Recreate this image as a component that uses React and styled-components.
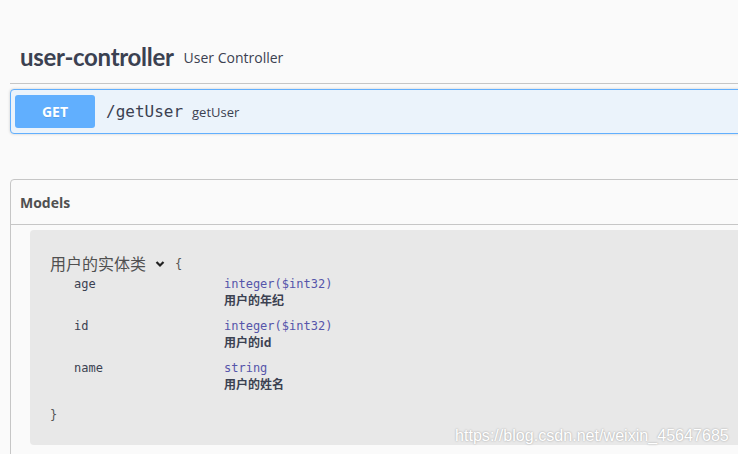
import React from "react";
import styled, { createGlobalStyle } from "styled-components";

const GlobalStyle = createGlobalStyle`
  html, body {
    margin: 0;
    padding: 0;
    background: #fafafa;
    overflow: hidden;
  }
  body {
    font-family: "Open Sans", "Noto Sans CJK SC", sans-serif;
    color: #3b4151;
  }
`;

const Page = styled.div`
  position: relative;
  width: 738px;
  height: 454px;
  padding-left: 10px;
  box-sizing: border-box;
  overflow: hidden;
`;

const Column = styled.div`
  width: 800px;
`;

const TagHeader = styled.div`
  display: flex;
  align-items: center;
  gap: 10px;
  height: 29px;
  padding: 42px 20px 12px 10px;
  border-bottom: 1px solid #c6c6c6;

  h3 {
    margin: 0;
    font-family: "Lato", sans-serif;
    font-size: 24px;
    font-weight: 700;
    letter-spacing: -0.3px;
    color: #3b4151;
  }

  small {
    margin-top: 2px;
    font-size: 14px;
    color: #3b4151;
  }
`;

const OpBlock = styled.div`
  display: flex;
  align-items: center;
  margin-top: 5px;
  padding: 5px 4px;
  border: 1px solid #61affe;
  border-radius: 4px;
  background: #ebf3fb;
  box-shadow: 0 0 3px rgba(0, 0, 0, 0.19);
`;

const MethodBadge = styled.span`
  display: flex;
  align-items: center;
  justify-content: center;
  width: 80px;
  height: 33px;
  border-radius: 3px;
  background: #61affe;
  color: #fff;
  font-size: 14px;
  font-weight: 700;
  text-shadow: 0 1px 0 rgba(0, 0, 0, 0.1);
`;

const Path = styled.span`
  margin-left: 11px;
  font-family: "DejaVu Sans Mono", monospace;
  font-size: 16px;
  color: #3b4151;
`;

const Summary = styled.span`
  margin-left: 9px;
  font-size: 13px;
  color: #3b4151;
`;

const ModelsSection = styled.section`
  margin-top: 45px;
  border: 1px solid #c6c6c6;
  border-radius: 4px;
  height: 400px;
`;

const ModelsHeader = styled.h4`
  margin: 0;
  height: 44px;
  display: flex;
  align-items: center;
  padding-left: 9px;
  border-bottom: 1px solid #c6c6c6;
  font-size: 14px;
  font-weight: 700;
  color: #505050;
`;

const ModelBox = styled.div`
  margin: 5px 0 0 19px;
  padding: 22px 20px 22px 20px;
  background: #e8e8e8;
  border-radius: 4px;
  font-family: "DejaVu Sans Mono", monospace;
  font-size: 12px;
  color: #3b4151;
`;

const ModelTitle = styled.div`
  display: flex;
  align-items: center;
  height: 22px;

  span.title {
    font-family: "Noto Sans CJK SC", sans-serif;
    font-size: 16px;
    color: #505050;
  }

  svg {
    margin: 2px 10px 0 9px;
  }
`;

const Brace = styled.div`
  color: #555;
  font-size: 12px;
  line-height: 15px;
  margin-top: ${(p) => (p.$open ? "3px" : "5px")};
`;

const PropList = styled.div`
  margin-top: 3px;
`;

const PropRow = styled.div`
  display: grid;
  grid-template-columns: 150px 1fr;
  padding: 0 0 12px 24px;
  line-height: 15px;
`;

const PropType = styled.div`
  color: #55a;
`;

const PropDesc = styled.div`
  font-family: "Noto Sans CJK SC", sans-serif;
  font-size: 12px;
  font-weight: 700;
  color: #3b4151;
`;

const Watermark = styled.span`
  position: absolute;
  left: 455px;
  top: 426px;
  font-family: "Liberation Sans", Arial, sans-serif;
  font-size: 16.1px;
  color: #fff;
  text-shadow: 0 0 2px rgba(0, 0, 0, 0.35);
  white-space: nowrap;
`;

const props = [
  { name: "age", type: "integer($int32)", desc: "用户的年纪" },
  { name: "id", type: "integer($int32)", desc: "用户的id" },
  { name: "name", type: "string", desc: "用户的姓名" },
];

const Chevron = () => (
  <svg width="10" height="8" viewBox="0 0 10 8">
    <polyline
      points="1.5,2 5,5.5 8.5,2"
      fill="none"
      stroke="#222"
      strokeWidth="2.2"
    />
  </svg>
);

const App = () => {
  return (
    <>
      <GlobalStyle />
      <Page>
        <Column>
          <TagHeader>
            <h3>user-controller</h3>
            <small>User Controller</small>
          </TagHeader>

          <OpBlock>
            <MethodBadge>GET</MethodBadge>
            <Path>/getUser</Path>
            <Summary>getUser</Summary>
          </OpBlock>

          <ModelsSection>
            <ModelsHeader>Models</ModelsHeader>
            <ModelBox>
              <ModelTitle>
                <span className="title">用户的实体类</span>
                <Chevron />
                <Brace as="span" $open>
                  {"{"}
                </Brace>
              </ModelTitle>
              <PropList>
                {props.map((p) => (
                  <PropRow key={p.name}>
                    <div>{p.name}</div>
                    <div>
                      <PropType>{p.type}</PropType>
                      <PropDesc>{p.desc}</PropDesc>
                    </div>
                  </PropRow>
                ))}
              </PropList>
              <Brace>{"}"}</Brace>
            </ModelBox>
          </ModelsSection>
        </Column>

        <Watermark>https://blog.csdn.net/weixin_45647685</Watermark>
      </Page>
    </>
  );
};

export default App;
